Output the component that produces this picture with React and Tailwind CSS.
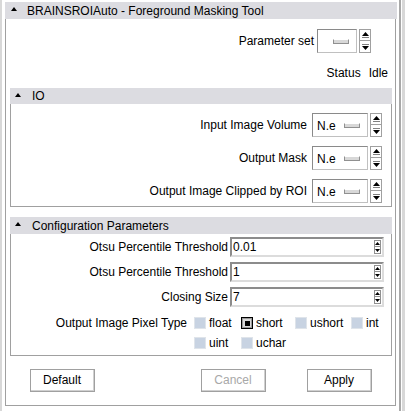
import React from "react";

const Tri = ({ down = false, w = 7, h = 4 }) => (
  <svg width={w} height={h} viewBox={`0 0 ${w} ${h}`} className="block">
    {down ? (
      <polygon points={`0,0 ${w},0 ${w / 2},${h}`} fill="#000" />
    ) : (
      <polygon points={`0,${h} ${w},${h} ${w / 2},0`} fill="#000" />
    )}
  </svg>
);

const Spin = () => (
  <div className="flex flex-col w-[12px] h-[24px]">
    <div className="h-[12px] flex flex-col items-center justify-center border border-[#a0a0a0] bg-white">
      <Tri />
      <div className="w-[7px] h-px bg-[#808080] mt-px" />
    </div>
    <div className="h-[12px] flex flex-col items-center justify-center border border-t-0 border-[#a0a0a0] bg-white">
      <div className="w-[7px] h-px bg-[#808080] mb-px" />
      <Tri down />
    </div>
  </div>
);

const Indicator = () => (
  <div className="w-[16px] h-[5px] border border-[#909090] border-t-white bg-[#d8d8d8]" />
);

const Combo = ({ text, w }) => (
  <div
    className={`h-[24px] ${w} border border-[#8a8a8a] border-b-[#c0c0c0] border-r-[#c0c0c0] bg-white flex items-center`}
  >
    {text ? <span className="ml-[4px] mt-[2px] text-[12px]">{text}</span> : null}
    <div className="ml-auto mr-[7px]">
      <Indicator />
    </div>
  </div>
);

const InSpin = () => (
  <div className="w-[7px] h-[14px] border border-[#909090] flex flex-col items-center justify-around bg-white">
    <Tri w={5} h={3} />
    <div className="w-[5px] h-px bg-[#909090]" />
    <Tri w={5} h={3} down />
  </div>
);

const Input = ({ value }) => (
  <div className="w-[154px] h-[20px] border-2 border-t-[#8c8c8c] border-l-[#8c8c8c] border-b-[#dcdcdc] border-r-[#dcdcdc] bg-white flex items-center">
    <span className="ml-[1px] text-[12px]">{value}</span>
    <div className="ml-auto mr-[1px]">
      <InSpin />
    </div>
  </div>
);

const Check = ({ checked }) =>
  checked ? (
    <div className="w-[12px] h-[12px] border border-black bg-[#9a9a9a] flex items-center justify-center">
      <div className="w-[8px] h-[8px] bg-[#d8d8d8] flex items-center justify-center">
        <div className="w-[5px] h-[5px] bg-black" />
      </div>
    </div>
  ) : (
    <div className="w-[12px] h-[12px] border border-[#dfe4ea] bg-[#c8d3e2]" />
  );

const CB = ({ label, checked }) => (
  <div className="flex items-center h-[14px]">
    <Check checked={checked} />
    <span className="ml-[3px]">{label}</span>
  </div>
);

const SectionHeader = ({ title, h }) => (
  <div className={`${h} bg-[#dcdce1] flex items-center`}>
    <div className="ml-[5px] mb-[3px]">
      <Tri w={6} h={4} />
    </div>
    <span className="ml-[11px]">{title}</span>
  </div>
);

const IORow = ({ label }) => (
  <div className="flex items-center justify-end h-[24px]">
    <span className="mr-[5px]">{label}</span>
    <Combo text="N.e" w="w-[56px]" />
    <div className="ml-[2px]">
      <Spin />
    </div>
  </div>
);

const Btn = ({ children, disabled, className }) => (
  <div
    className={`w-[65px] h-[23px] border border-[#a0a0a0] bg-white flex items-center justify-center ${className} ${
      disabled ? "text-[#a8a8a8]" : "text-black"
    }`}
  >
    <div className="w-full h-full border-r border-b border-[#d0d0d0] flex items-center justify-center">
      {children}
    </div>
  </div>
);

export default function App() {
  return (
    <div className="w-[407px] h-[411px] bg-white overflow-hidden flex font-['Liberation_Sans',Arial,sans-serif] text-[12px] leading-none text-black">
      <div className="w-[2px] h-full bg-[#d8d8d8]" />
      <div className="w-[3px] h-full" />
      <div className="w-[392px] flex flex-col pt-[2px]">
        {/* Title header */}
        <div className="h-[17px] bg-[#dcdce1] flex items-center">
          <div className="ml-[6px] mb-[3px]">
            <Tri w={6} h={4} />
          </div>
          <span className="ml-[10px] text-[12px]">BRAINSROIAuto - Foreground Masking Tool</span>
        </div>
        {/* Outer box */}
        <div className="w-[391px] h-[387px] border-l border-r border-b border-[#a0a0a0] flex flex-col">
          {/* Parameter set */}
          <div className="mt-[10px] flex items-center justify-end pr-[24px] h-[24px]">
            <span className="mr-[3px]">Parameter set</span>
            <Combo w="w-[40px]" />
            <div className="ml-[2px]">
              <Spin />
            </div>
          </div>
          {/* Status */}
          <div className="mt-[13px] h-[14px] flex items-center justify-end pr-[7px] gap-[8px]">
            <span>Status</span>
            <span>Idle</span>
          </div>
          {/* IO */}
          <div className="mt-[8px] ml-[4px] w-[382px]">
            <SectionHeader title="IO" h="h-[16px]" />
            <div className="border-l border-r border-b border-[#a0a0a0] pt-[9px] pb-[3px] pr-[9px] flex flex-col gap-[9px]">
              <IORow label="Input Image Volume" />
              <IORow label="Output Mask" />
              <IORow label="Output Image Clipped by ROI" />
            </div>
          </div>
          {/* Configuration */}
          <div className="mt-[10px] ml-[4px] w-[382px]">
            <SectionHeader title="Configuration Parameters" h="h-[17px]" />
            <div className="h-[122px] border-l border-r border-b border-[#a0a0a0] pt-[3px] flex flex-col">
              <div className="grid grid-cols-[217px_154px] gap-x-[2px] gap-y-[5px] items-center">
                <span className="text-right">Otsu Percentile Threshold</span>
                <Input value="0.01" />
                <span className="text-right">Otsu Percentile Threshold</span>
                <Input value="1" />
                <span className="text-right">Closing Size</span>
                <Input value="7" />
              </div>
              <div className="mt-[9px] flex">
                <div className="w-[177px] h-[14px] flex items-center justify-end">
                  <span>Output Image Pixel Type</span>
                </div>
                <div className="ml-[7px] grid grid-cols-[47px_54px_56px_40px] gap-y-[6px]">
                  <CB label="float" />
                  <CB label="short" checked />
                  <CB label="ushort" />
                  <CB label="int" />
                  <CB label="uint" />
                  <CB label="uchar" />
                </div>
              </div>
            </div>
          </div>
          {/* Buttons */}
          <div className="mt-[13px] flex">
            <Btn className="ml-[24px]">Default</Btn>
            <Btn className="ml-[106px]" disabled>
              Cancel
            </Btn>
            <Btn className="ml-[41px]">Apply</Btn>
          </div>
        </div>
      </div>
      <div className="w-[2px] h-full" />
      <div className="w-[2px] h-full bg-[#a8a8a8]" />
      <div className="w-[1px] h-full" />
      <div className="w-[3px] h-full bg-[#d8d8d8]" />
    </div>
  );
}
